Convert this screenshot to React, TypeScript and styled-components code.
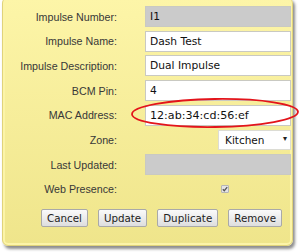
import { createGlobalStyle, styled } from 'styled-components';

const GlobalStyle = createGlobalStyle`
  html, body {
    margin: 0;
    padding: 0;
    background: #ffffff;
  }

  body {
    width: 300px;
    height: 252px;
    overflow: hidden;
    font-family: 'Liberation Sans', Arial, sans-serif;
  }
`;

const fields = [
  { label: 'Impulse Number:', value: 'I1', disabled: true },
  { label: 'Impulse Name:', value: 'Dash Test' },
  { label: 'Impulse Description:', value: 'Dual Impulse' },
  { label: 'BCM Pin:', value: '4' },
  { label: 'MAC Address:', value: '12:ab:34:cd:56:ef', big: true },
];

const buttons = ['Cancel', 'Update', 'Duplicate', 'Remove'];

/**
 * 임펄스 편집 패널 (노란 카드 + MAC 주소에 빨간 표시)
 */
export default function App() {
  return (
    <>
      <GlobalStyle />
      <Page>
        <Panel>
          <Form>
            {fields.map((f) => (
              <Row key={f.label}>
                <Label>{f.label}</Label>
                <TextInput
                  defaultValue={f.value}
                  disabled={f.disabled}
                  $grey={f.disabled}
                  $big={f.big}
                />
              </Row>
            ))}
            <Row>
              <Label>Zone:</Label>
              <SelectWrap>
                <Select defaultValue="Kitchen">
                  <option>Kitchen</option>
                </Select>
                <Arrow>▾</Arrow>
              </SelectWrap>
            </Row>
            <Row>
              <Label>Last Updated:</Label>
              <TextInput defaultValue="" disabled $grey />
            </Row>
            <Row>
              <Label>Web Presence:</Label>
              <CheckCell>
                <CheckBox>
                  <svg width="6" height="6" viewBox="0 0 6 6">
                    <path d="M0.8 3.2 L2.3 4.7 L5.2 1.2" fill="none" stroke="#555" strokeWidth="1.3" />
                  </svg>
                </CheckBox>
              </CheckCell>
            </Row>
          </Form>
          <ButtonBar>
            {buttons.map((b) => (
              <Button key={b}>{b}</Button>
            ))}
          </ButtonBar>
        </Panel>
        <Highlight width="172" height="34" viewBox="0 0 172 34">
          <ellipse cx="85" cy="16" rx="83" ry="14" fill="none" stroke="#e3141b" strokeWidth="1.8" transform="rotate(-0.8 85 16)" />
        </Highlight>
      </Page>
    </>
  );
}

const Page = styled.div`
  position: relative;
  width: 300px;
  height: 252px;
`;

const Panel = styled.div`
  box-sizing: border-box;
  width: 291px;
  height: 249px;
  margin: -3px 0 0 2px;
  padding: 8px 1px 0 1px;

  border: 1px solid #e0d37a;
  border-radius: 6px;
  background: linear-gradient(#fdf5a8, #efe58b);
  box-shadow:
    inset 0 0 0 2px #fcf4a8,
    2px 3px 3px rgba(0, 0, 0, 0.45);
`;

const Form = styled.div`
  display: flex;
  flex-direction: column;
  gap: 3.7px;
`;

const Row = styled.div`
  display: grid;
  grid-template-columns: 113px 146px;
  column-gap: 28px;
  align-items: center;
  height: 21px;
`;

const Label = styled.div`
  text-align: right;
  font-size: 10.7px;
  color: #383838;
  white-space: nowrap;
`;

const TextInput = styled.input<{ $grey?: boolean; $big?: boolean }>`
  box-sizing: border-box;
  width: 146px;
  height: 21px;
  padding: 0 4px;
  margin: 0;

  border: 1px solid #c9c9c2;
  border-radius: 0;
  background: ${(p) => (p.$grey ? '#cbcbcb' : '#ffffff')};
  outline: none;

  font-family: 'DejaVu Sans', Verdana, sans-serif;
  font-size: ${(p) => (p.$big ? '11.1px' : '10.7px')};
  color: #111;
`;

const SelectWrap = styled.div`
  position: relative;
  justify-self: end;
  width: 73px;
  height: 20px;
`;

const Select = styled.select`
  box-sizing: border-box;
  width: 100%;
  height: 100%;
  padding: 0 0 0 6px;
  margin: 0;
  appearance: none;

  border: 1px solid #dcdcd4;
  border-radius: 0;
  background: #ffffff;

  font-family: 'DejaVu Sans', Verdana, sans-serif;
  font-size: 10.5px;
  color: #111;
`;

const Arrow = styled.span`
  position: absolute;
  right: 4px;
  top: 4px;
  font-family: 'DejaVu Sans', sans-serif;
  font-size: 8px;
  color: #222;
  pointer-events: none;
`;

const CheckCell = styled.div`
  display: flex;
  align-items: center;
  padding-left: 76px;
`;

const CheckBox = styled.span`
  box-sizing: border-box;
  display: flex;
  align-items: center;
  justify-content: center;
  width: 8px;
  height: 8px;

  border: 1px solid #b5b5b5;
  border-radius: 1px;
  background: #e4e4e4;
`;

const ButtonBar = styled.div`
  display: flex;
  gap: 10px;
  margin-top: 9px;
  padding-left: 37px;
`;

const Button = styled.button`
  box-sizing: border-box;
  height: 18px;
  padding: 0 5px;
  margin: 0;

  border: 1px solid #a9a9a9;
  border-radius: 2px;
  background: linear-gradient(#fafafa, #dedede);

  font-family: 'DejaVu Sans', Verdana, sans-serif;
  font-size: 10.3px;
  color: #222;
`;

const Highlight = styled.svg`
  position: absolute;
  left: 130px;
  top: 100px;
  pointer-events: none;
`;
